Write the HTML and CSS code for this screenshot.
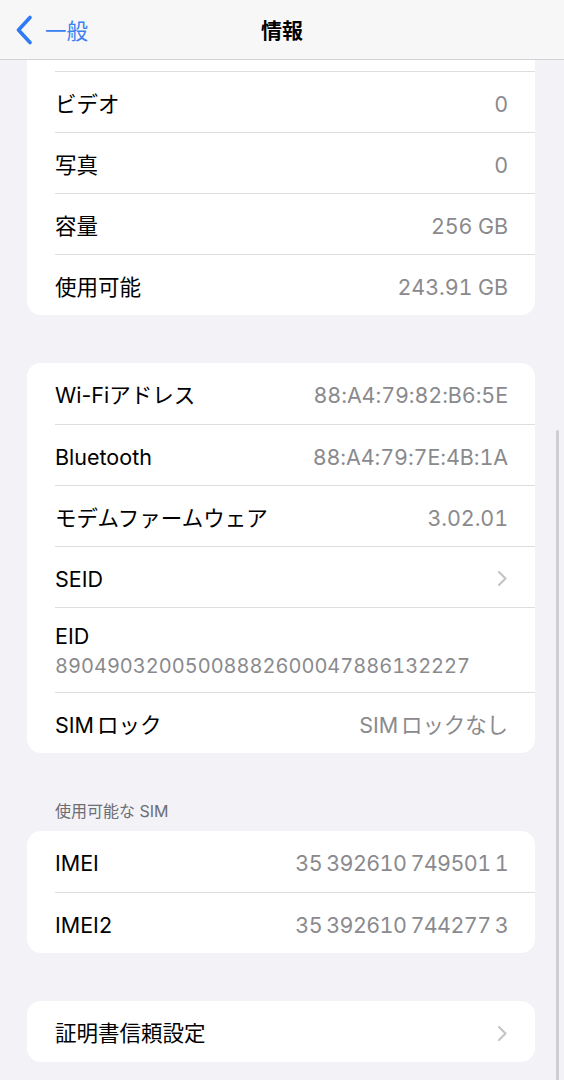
FILE: index.html
```html
<!DOCTYPE html>
<html lang="ja">
<head>
<meta charset="utf-8">
<title>情報</title>
<link rel="stylesheet" href="styles.css">
</head>
<body>
<header class="nav">
  <a class="back">
    <svg class="back-icon" width="18" height="30" viewBox="0 0 18 30"><path d="M15 2.5 L3.5 15 L15 27.5" fill="none" stroke="#2f7bf5" stroke-width="3.6" stroke-linecap="round" stroke-linejoin="round"/></svg>
    <span class="back-label">一般</span>
  </a>
  <h1 class="title">情報</h1>
</header>

<main class="content">
  <section class="card first">
    <div class="row spacer"></div>
    <div class="row"><span class="label">ビデオ</span><span class="value">0</span></div>
    <div class="row"><span class="label">写真</span><span class="value">0</span></div>
    <div class="row"><span class="label">容量</span><span class="value">256 GB</span></div>
    <div class="row"><span class="label">使用可能</span><span class="value">243.91 GB</span></div>
  </section>

  <section class="card gap">
    <div class="row"><span class="label">Wi-Fiアドレス</span><span class="value">88:A4:79:82:B6:5E</span></div>
    <div class="row"><span class="label">Bluetooth</span><span class="value">88:A4:79:7E:4B:1A</span></div>
    <div class="row"><span class="label">モデムファームウェア</span><span class="value">3.02.01</span></div>
    <div class="row"><span class="label">SEID</span>
      <svg class="chev" width="11" height="17" viewBox="0 0 11 17"><path d="M2 2 L8.5 8.5 L2 15" fill="none" stroke="#c4c4c7" stroke-width="2.1" stroke-linecap="round" stroke-linejoin="round"/></svg>
    </div>
    <div class="row stacked"><span class="label">EID</span><span class="value mono">89049032005008882600047886132227</span></div>
    <div class="row"><span class="label">SIM<span class="thin"></span>ロック</span><span class="value">SIM<span class="thin"></span>ロックなし</span></div>
  </section>

  <h2 class="section-header">使用可能な SIM</h2>
  <section class="card">
    <div class="row"><span class="label">IMEI</span><span class="value imei">35 392610 749501 1</span></div>
    <div class="row"><span class="label">IMEI2</span><span class="value imei">35 392610 744277 3</span></div>
  </section>

  <section class="card gap">
    <div class="row"><span class="label">証明書信頼設定</span>
      <svg class="chev" width="11" height="17" viewBox="0 0 11 17"><path d="M2 2 L8.5 8.5 L2 15" fill="none" stroke="#c4c4c7" stroke-width="2.1" stroke-linecap="round" stroke-linejoin="round"/></svg>
    </div>
  </section>
</main>

<div class="scrollbar"></div>
</body>
</html>
```

FILE: styles.css
```css
html, body {
  margin: 0;
  padding: 0;
}
body {
  background: #f2f2f7;
  font-family: "Inter", "Noto Sans CJK JP", sans-serif;
  color: #000;
  width: 564px;
  height: 1080px;
  overflow: hidden;
  position: relative;
}
.nav {
  position: absolute;
  top: 0;
  left: 0;
  right: 0;
  height: 59px;
  background: #f7f7f7;
  border-bottom: 1px solid #d3d3d6;
  display: flex;
  align-items: center;
  justify-content: center;
  z-index: 2;
}
.back {
  position: absolute;
  left: 15px;
  top: 15px;
  display: flex;
  align-items: center;
  gap: 12px;
  color: #3a80f2;
}
.back-icon {
  display: block;
}
.back-label {
  font-family: "Noto Sans CJK JP", sans-serif;
  font-size: 21.5px;
  line-height: 30px;
  color: #3a80f2;
}
.title {
  margin: 0;
  font-family: "Noto Sans CJK JP", sans-serif;
  font-size: 21px;
  font-weight: 700;
  line-height: 30px;
  padding-bottom: 1px;
}
.content {
  display: flex;
  flex-direction: column;
  padding-bottom: 40px;
}
.card {
  margin-left: 27px;
  width: 508px;
  background: #fff;
  border-radius: 14px;
  overflow: hidden;
}
.card.first {
  margin-top: 10px;
}
.card.gap {
  margin-top: 48px;
}
.row {
  margin-left: 28px;
  padding-right: 27px;
  padding-top: 3px;
  height: 61px;
  box-sizing: border-box;
  display: flex;
  align-items: center;
  justify-content: space-between;
}
.row + .row {
  border-top: 1px solid #dedee1;
}
.label {
  font-size: 21.5px;
  line-height: 28px;
  letter-spacing: 0;
}
.value {
  font-size: 21.5px;
  line-height: 28px;
  color: #8a8a8e;
  font-variant-numeric: tabular-nums;
  letter-spacing: -0.1px;
}
.thin {
  display: inline-block;
  width: 3px;
}
.value.imei {
  word-spacing: -1px;
  letter-spacing: -0.6px;
}
.row.stacked {
  height: 85px;
  flex-direction: column;
  align-items: flex-start;
  justify-content: center;
  gap: 2px;
  padding-top: 2px;
}
.value.mono {
  font-size: 20px;
  letter-spacing: 0;
}
.chev {
  display: block;
}
.section-header {
  margin: 0;
  padding: 46px 0 8px 55px;
  font-family: "Inter", "Noto Sans CJK JP", sans-serif;
  font-size: 16px;
  font-weight: 400;
  line-height: 24px;
  color: #6d6d72;
}
.scrollbar {
  position: absolute;
  right: 5px;
  top: 430px;
  width: 3.5px;
  height: 660px;
  border-radius: 2px;
  background: #cfcfd3;
  z-index: 3;
}
```
